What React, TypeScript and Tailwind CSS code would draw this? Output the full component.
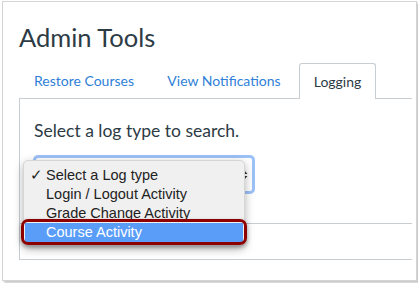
import React from 'react';

const tabs = [
  {label: 'Restore Courses', width: 'w-[130px]', active: false},
  {label: 'View Notifications', width: 'w-[150px]', active: false},
  {label: 'Logging', width: 'w-[77px]', active: true},
];

const logTypes = ['Select a Log type', 'Login / Logout Activity', 'Grade Change Activity', 'Course Activity'];

export default function App() {
  return (
    <div className="w-[418px] h-[283px] bg-white overflow-hidden">
      {/* screenshot frame */}
      <div className="ml-[2px] mt-[1px] w-[415px] h-[280px] border border-[#d4d4d4] shadow-[2px_2px_2px_rgba(0,0,0,0.22)] pl-[16px] pt-[19px] font-['Lato',sans-serif] text-[#2d3b45]">
        <h1 className="text-[25.5px] leading-[32px] font-normal">Admin Tools</h1>

        {/* tabs */}
        <div className="mt-[10px] flex h-[35px]">
          {tabs.map((t) => (
            <div
              key={t.label}
              className={
                t.active
                  ? `${t.width} relative z-10 h-[36px] flex items-center justify-center text-[14px] leading-[35px] text-[#2d3b45] bg-white border border-b-0 border-[#c7cdd1] rounded-t-[3px]`
                  : `${t.width} h-[35px] flex items-center justify-center text-[14px] leading-[35px] text-[#2f7fd8]`
              }
            >
              {t.label}
            </div>
          ))}
        </div>

        {/* panel */}
        <div className="w-[393px] h-[162px] border border-r-0 border-[#c7cdd1] pl-[14px] pt-[20px]">
          <p className="text-[17.5px] leading-[24px]">Select a log type to search.</p>

          <div className="relative mt-[12px] w-[222px] h-[39px] -ml-[1px]">
            <div className="w-full h-full rounded-[5px] border-[3px] border-[#9cc1f7] bg-white flex items-center justify-end pr-[4px]">
              <svg width="8" height="12" viewBox="0 0 8 12">
                <path d="M4 1 L7.5 5 L0.5 5 Z" fill="#333" />
                <path d="M4 11 L7.5 7 L0.5 7 Z" fill="#333" />
              </svg>
            </div>

            {/* open dropdown menu */}
            <div className="absolute left-[-10px] top-[5px] w-[222px] rounded-[5px] border border-[#d6d6d6] bg-[#f0f0f0] shadow-[0_3px_10px_rgba(0,0,0,0.3)] pt-[5px] pb-[3px] font-['Liberation_Sans',Arial,sans-serif] text-[14.5px] text-[#222]">
              {logTypes.map((item, i) => {
                const last = i === logTypes.length - 1;
                return (
                  <div
                    key={item}
                    className={
                      last
                        ? 'relative mx-[1px] h-[19px] leading-[19px] pl-[21px] bg-[#5a9df8] text-white'
                        : 'relative h-[19px] leading-[19px] pl-[22px]'
                    }
                  >
                    {i === 0 && <span className="absolute left-[6px] top-0">✓</span>}
                    {item}
                    {last && (
                      <span className="absolute -left-[4px] -right-[4px] -top-[4px] -bottom-[3px] rounded-[7px] border-[3px] border-[#8e0000] shadow-[0_2px_4px_rgba(0,0,0,0.35)]" />
                    )}
                  </div>
                );
              })}
            </div>
          </div>

          {/* divider */}
          <div className="mt-[29px] -ml-[14px] border-t border-[#c7cdd1]" />
        </div>
      </div>
    </div>
  );
}
